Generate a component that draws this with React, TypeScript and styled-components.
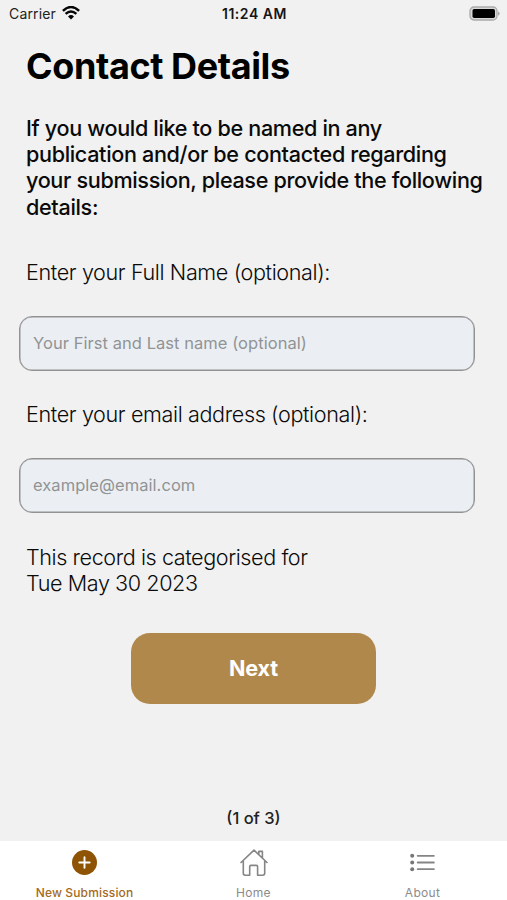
import React from "react";
import styled, { createGlobalStyle } from "styled-components";

const GlobalStyle = createGlobalStyle`
  * { box-sizing: border-box; }
  body { margin: 0; background: #f1f1f1; }
`;

const Screen = styled.div`
  display: flex;
  flex-direction: column;
  height: 900px;
  width: 507px;
  overflow: hidden;
  background: #f1f1f1;
  color: #0a0a0a;
  font-family: Inter, "Liberation Sans", sans-serif;
`;

const StatusBar = styled.header`
  display: grid;
  grid-template-columns: 1fr auto 1fr;
  align-items: center;
  height: 28px;
  padding: 0 7px 0 9px;
`;

const Carrier = styled.div`
  display: flex;
  align-items: center;
  gap: 6px;
  font-size: 14px;
  line-height: 28px;
  letter-spacing: 0.15px;
  color: #222;
  svg { margin-top: -2px; }
`;

const Clock = styled.div`
  font-size: 14px;
  font-weight: 600;
  line-height: 28px;
  letter-spacing: 0.55px;
  color: #151515;
`;

const BatteryIcon = styled.svg`
  justify-self: end;
  margin-top: -2px;
`;

const Content = styled.main`
  display: flex;
  flex: 1;
  flex-direction: column;
  padding: 15px 19px 0;
`;

const Title = styled.h1`
  margin: 0 7px;
  font-size: 36px;
  font-weight: 700;
  line-height: 46px;
  letter-spacing: -0.4px;
  color: #000;
`;

const Intro = styled.p`
  margin: 26px 0 0 7px;
  font-size: 21.6px;
  font-weight: 500;
  line-height: 26.2px;
  letter-spacing: -0.34px;
  white-space: nowrap;
`;

const Label = styled.label<{ $top: number }>`
  margin: ${({ $top }) => $top}px 0 0 7px;
  font-size: 21.6px;
  font-weight: 300;
  line-height: 26px;
  letter-spacing: -0.38px;
`;

const Field = styled.input`
  width: 456px;
  height: 55px;
  margin-top: 31px;
  padding: 0 13px;
  border: 1px solid #929292;
  border-radius: 13px;
  background: #ebeff3;
  box-shadow: inset 0 0 0 0.5px #929292;
  font: 400 16.5px Inter, "Liberation Sans", sans-serif;
  letter-spacing: 0.05px;
  outline: none;
  &::placeholder { color: #919395; opacity: 1; }
`;

const Category = styled.p`
  margin: 31px 0 0 7px;
  font-size: 21.6px;
  font-weight: 300;
  line-height: 26px;
  letter-spacing: -0.42px;
`;

const NextButton = styled.button`
  align-self: center;
  width: 245px;
  height: 71px;
  margin-top: 37px;
  padding: 0;
  border: 0;
  border-radius: 19px;
  background: #b1884b;
  color: #fff;
  font: 700 21.6px Inter, "Liberation Sans", sans-serif;
  letter-spacing: -0.15px;
`;

const PageCount = styled.div`
  margin: auto 0 12px;
  font-size: 16.5px;
  font-weight: 500;
  line-height: 22px;
  text-align: center;
  color: #222;
`;

const TabBar = styled.nav`
  display: grid;
  grid-template-columns: repeat(3, 1fr);
  height: 59px;
  background: #fff;
`;

const Tab = styled.a<{ $active?: boolean }>`
  display: flex;
  flex-direction: column;
  align-items: center;
  padding-top: 5px;
  color: ${({ $active }) => ($active ? "#a56a1d" : "#8b8b8b")};
  font-size: 12px;
  font-weight: ${({ $active }) => ($active ? 500 : 400)};
  line-height: 16px;
  letter-spacing: ${({ $active }) => ($active ? 0.15 : 0.3)}px;
  svg { display: block; margin-bottom: 7px; }
`;

export default function App() {
  return (
    <>
      <GlobalStyle />
      <Screen>
        <StatusBar>
          <Carrier>
            Carrier
            <svg width="18" height="14" viewBox="0 0 18 14" fill="none" stroke="#050505">
              <path d="M.9 4.9Q9-2.8 17.1 4.9" strokeWidth="2.5" />
              <path d="M3.6 7.9Q9 2.9 14.4 7.9" strokeWidth="2.4" />
              <path d="M9 13.4 6 10.4Q9 7.6 12 10.4Z" fill="#050505" stroke="none" />
            </svg>
          </Carrier>
          <Clock>11:24 AM</Clock>
          <BatteryIcon width="31" height="15" viewBox="0 0 31 15">
            <rect x="1" y="1" width="27" height="13" rx="4" fill="#d8d8d8" stroke="#aaa" strokeWidth="1.3" />
            <rect x="3.5" y="3" width="22.5" height="9" rx="1.7" fill="#000" />
            <path d="M29 5.2Q32.4 7.5 29 9.8Z" fill="#aaa" />
          </BatteryIcon>
        </StatusBar>
        <Content>
          <Title>Contact Details</Title>
          <Intro>
            If you would like to be named in any<br />
            publication and/or be contacted regarding<br />
            your submission, please provide the following<br />
            details:
          </Intro>
          <Label $top={39} htmlFor="name">Enter your Full Name (optional):</Label>
          <Field id="name" placeholder="Your First and Last name (optional)" />
          <Label $top={30} htmlFor="email">Enter your email address (optional):</Label>
          <Field id="email" placeholder="example@email.com" />
          <Category>
            This record is categorised for<br />
            Tue May 30 2023
          </Category>
          <NextButton>Next</NextButton>
          <PageCount>(1 of 3)</PageCount>
        </Content>
        <TabBar>
          <Tab $active>
            <svg width="32" height="32" viewBox="0 0 32 32">
              <circle cx="15.5" cy="16.5" r="12.5" fill="#8f5304" />
              <path d="M15.5 11.3V21.7M10.3 16.5H20.7" stroke="#fff" strokeWidth="1.9" strokeLinecap="round" />
            </svg>
            New Submission
          </Tab>
          <Tab>
            <svg width="32" height="32" viewBox="0 0 32 32" fill="none" stroke="#858585" strokeWidth="1.6" strokeLinecap="round" strokeLinejoin="round">
              <path d="M3 16.5 16 4.2 29 16.5M20.8 8.5V5.4H24.4V12M5.3 15V27.3Q5.3 29.2 7.2 29.2H11.7V20.6Q11.7 19.4 12.9 19.4H18.4Q19.6 19.4 19.6 20.6V29.2H24.8Q26.7 29.2 26.7 27.3V15" />
            </svg>
            Home
          </Tab>
          <Tab>
            <svg width="32" height="32" viewBox="0 0 32 32" fill="none" stroke="#858585" strokeWidth="1.8" strokeLinecap="round">
              <path d="M10.7 9.8H26.9M10.7 16.5H26.9M10.7 23.2H26.9" />
              <g fill="#777" stroke="none">
                <circle cx="5.2" cy="9.8" r="2" />
                <circle cx="5.2" cy="16.5" r="2" />
                <circle cx="5.2" cy="23.2" r="2" />
              </g>
            </svg>
            About
          </Tab>
        </TabBar>
      </Screen>
    </>
  );
}
